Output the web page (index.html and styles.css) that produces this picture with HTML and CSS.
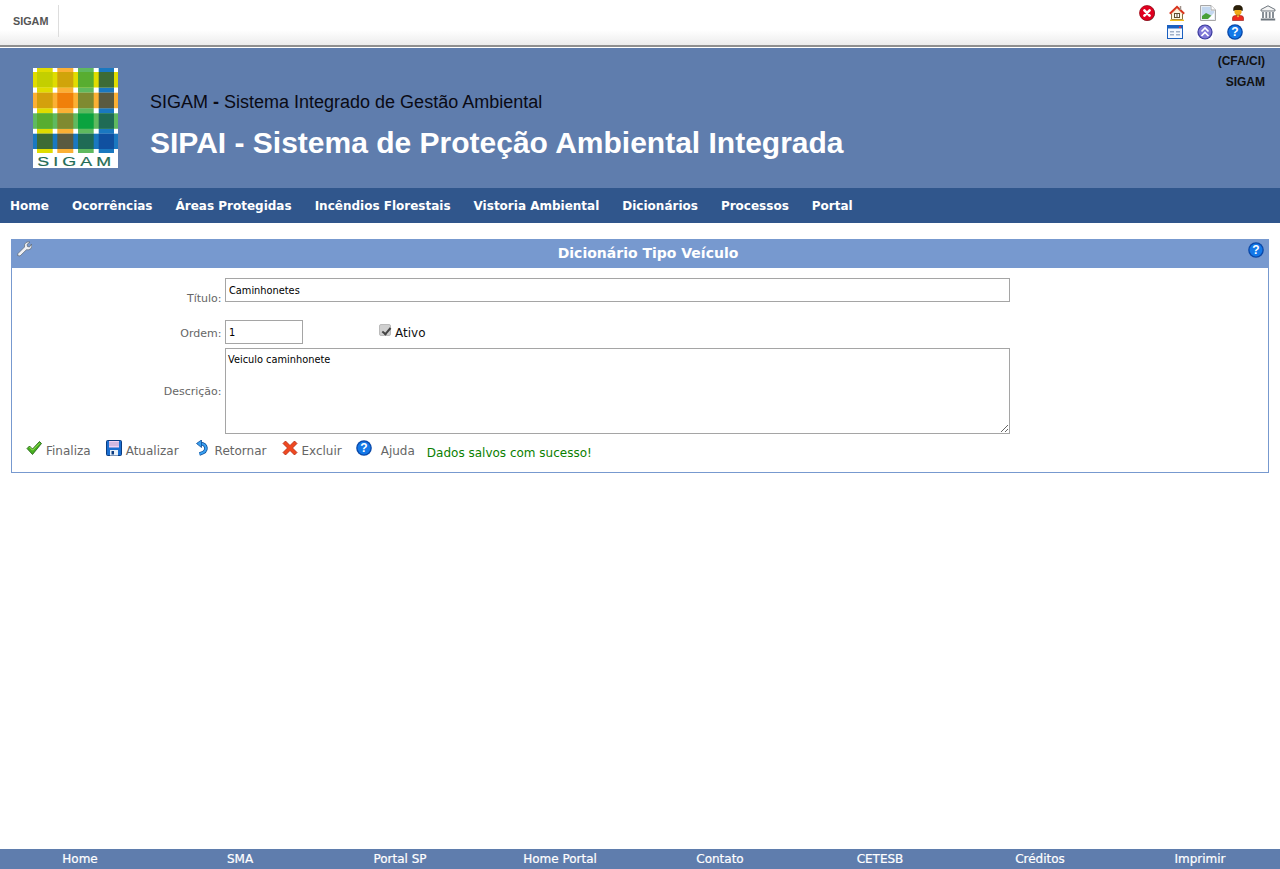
FILE: index.html
```html
<!DOCTYPE html>
<html lang="pt-BR">
<head>
<meta charset="utf-8">
<title>SIPAI - Dicionário Tipo Veículo</title>
<link rel="stylesheet" href="styles.css">
</head>
<body>
<div class="page">
  <div class="topbar">
    <div class="brand">SIGAM</div>
    <div class="tools">
      <div class="tool-row">
        <svg class="ico" viewBox="0 0 16 16"><circle cx="8.500" cy="8.500" r="7.500" fill="#777"/><circle cx="8" cy="8" r="7.500" fill="#e00020" stroke="#980010" stroke-width=".7"/><path d="M5.400 5.400l5.200 5.200M10.600 5.400l-5.200 5.200" stroke="#fff" stroke-width="2.600" stroke-linecap="round"/></svg>
        <svg class="ico" viewBox="0 0 16 16"><path d="M2.500 8v6.500h11V8" fill="#fff8e0" stroke="#8a7040"/><path d="M.8 8.800L8 1.800l7.200 7" fill="#f8e8d0" stroke="#d8341c" stroke-width="2"/><path d="M11.500 1v4" stroke="#a09088" stroke-width="1.500"/><path d="M3.500 9.500L8 5l4.500 4.500V14h-9z" fill="#fff8e0"/><rect x="5.500" y="8.500" width="5" height="4" fill="#fff" stroke="#605030"/><path d="M8 8.500v4" stroke="#605030"/><path d="M1 15.300h14" stroke="#f0c020" stroke-width="1.400"/></svg>
        <svg class="ico" viewBox="0 0 16 16"><path d="M.5.500h10.500l4.500 4.500v10.500H.5z" fill="#e8eef4" stroke="#a8a8a8"/><path d="M11 .5v4.500h4.500" fill="#fff" stroke="#a8a8a8"/><path d="M2 2h8.500v4H14v8H2z" fill="#c4d8f0"/><path d="M2 14V11l4-3 4 2 2 1-3 3z" fill="#48a038"/><path d="M8 14l6-6v6z" fill="#fff"/></svg>
        <svg class="ico" viewBox="0 0 16 16"><path d="M3.500 4.500Q3.500 .3 8 .3t4.500 4.200v1h-9z" fill="#2c2008" stroke="#181004" stroke-width=".5"/><path d="M4.500 5h7v3L10 10H6L4.500 8z" fill="#f0a818"/><path d="M6 9.500h4v2H6z" fill="#c88810"/><path d="M2.500 15.500V13q0-2.500 3-2.500h5q3 0 3 2.500v2.500z" fill="#ee2a20" stroke="#901810" stroke-width=".6"/><path d="M6.500 10.500h3l-1.500 2z" fill="#f8d040"/></svg>
        <svg class="ico" viewBox="0 0 16 16"><path d="M8 .8L1 4.500v1.500h14V4.500z" fill="#f4f4f4" stroke="#6c747c"/><path d="M3 7v6M6.300 7v6M9.700 7v6M13 7v6" stroke="#7c848c" stroke-width="1.800"/><path d="M.8 14.500h14.400" stroke="#6c747c" stroke-width="2"/></svg>
      </div>
      <div class="tool-row tool-row-low">
        <svg class="ico" viewBox="0 0 16 16"><rect x=".5" y="1.500" width="15" height="13" fill="#f4f8ff" stroke="#1a60c0"/><rect x="1" y="2" width="14" height="2.500" fill="#1a60c0"/><rect x="12" y="2.500" width="2" height="1.500" fill="#e83030"/><path d="M3 7h4v1.500H3zM9 7h4v1.500H9zM3 10h4v1.500H3zM9 10h4v1.500H9z" fill="#a0b0c8"/></svg>
        <svg class="ico" viewBox="0 0 16 16"><rect width="16" height="16" fill="#fff"/><circle cx="8" cy="8" r="7.600" fill="#3c3c9c"/><circle cx="8" cy="8" r="6.400" fill="#8078d8"/><path d="M4.500 7.500L8 4l3.500 3.500M4.500 12L8 8.500l3.500 3.500" fill="none" stroke="#fff" stroke-width="1.700"/></svg>
        <svg class="ico" viewBox="0 0 16 16"><circle cx="8" cy="8" r="7.800" fill="#0a48a8"/><circle cx="8" cy="8" r="6.500" fill="#1478e8"/><text class="q" x="8" y="12.400">?</text></svg>
      </div>
    </div>
  </div>

  <header class="banner">
    <svg class="logo" viewBox="0 0 85 100" role="img" aria-label="SIGAM">
      <rect width="85" height="100" fill="#fff"/>
      <rect x="0" y="4" width="85" height="15.500" fill="#e0dc00"/>
      <rect x="0" y="24.700" width="85" height="15.500" fill="#fbb034"/>
      <rect x="0" y="45.300" width="85" height="15.500" fill="#5fb95f"/>
      <rect x="0" y="65.700" width="85" height="15.300" fill="#1a78c0"/>
      <rect x="4" y="4" width="15.700" height="15.500" fill="#c3cf00"/>
      <rect x="4" y="0" width="15.700" height="4" fill="#e0dc00"/><rect x="4" y="19.500" width="15.700" height="5.200" fill="#e0dc00"/><rect x="4" y="40.200" width="15.700" height="5.100" fill="#e0dc00"/><rect x="4" y="60.800" width="15.700" height="4.900" fill="#e0dc00"/><rect x="4" y="81" width="15.700" height="4" fill="#e0dc00"/>
      <rect x="24.300" y="0" width="16" height="4" fill="#fbb034"/><rect x="24.300" y="19.500" width="16" height="5.200" fill="#fbb034"/><rect x="24.300" y="40.200" width="16" height="5.100" fill="#fbb034"/><rect x="24.300" y="60.800" width="16" height="4.900" fill="#fbb034"/><rect x="24.300" y="81" width="16" height="4" fill="#fbb034"/>
      <rect x="45" y="0" width="15.700" height="4" fill="#5fb95f"/><rect x="45" y="19.500" width="15.700" height="5.200" fill="#5fb95f"/><rect x="45" y="40.200" width="15.700" height="5.100" fill="#5fb95f"/><rect x="45" y="60.800" width="15.700" height="4.900" fill="#5fb95f"/><rect x="45" y="81" width="15.700" height="4" fill="#5fb95f"/>
      <rect x="65.700" y="0" width="15.300" height="4" fill="#1a78c0"/><rect x="65.700" y="19.500" width="15.300" height="5.200" fill="#1a78c0"/><rect x="65.700" y="40.200" width="15.300" height="5.100" fill="#1a78c0"/><rect x="65.700" y="60.800" width="15.300" height="4.900" fill="#1a78c0"/><rect x="65.700" y="81" width="15.300" height="4" fill="#1a78c0"/>
      <rect x="24.300" y="4" width="16" height="15.500" fill="#d0a40a"/><rect x="45" y="4" width="15.700" height="15.500" fill="#58ad30"/><rect x="65.700" y="4" width="15.300" height="15.500" fill="#3d6b35"/>
      <rect x="4" y="24.700" width="15.700" height="15.500" fill="#d4a00c"/><rect x="24.300" y="24.700" width="16" height="15.500" fill="#f0800a"/><rect x="45" y="24.700" width="15.700" height="15.500" fill="#7f8a30"/><rect x="65.700" y="24.700" width="15.300" height="15.500" fill="#5a5a40"/>
      <rect x="4" y="45.300" width="15.700" height="15.500" fill="#58ad30"/><rect x="24.300" y="45.300" width="16" height="15.500" fill="#7f8a30"/><rect x="45" y="45.300" width="15.700" height="15.500" fill="#0aa33f"/><rect x="65.700" y="45.300" width="15.300" height="15.500" fill="#1f6b55"/>
      <rect x="4" y="65.700" width="15.700" height="15.300" fill="#3d6b35"/><rect x="24.300" y="65.700" width="16" height="15.300" fill="#5a5a40"/><rect x="45" y="65.700" width="15.700" height="15.300" fill="#1f6b55"/><rect x="65.700" y="65.700" width="15.300" height="15.300" fill="#1050a0"/>
      <text class="logo-text" x="4.300" y="97.600" textLength="78" lengthAdjust="spacingAndGlyphs">SIGAM</text>
    </svg>
    <div class="titles">
      <div class="subtitle">SIGAM <b>-</b> Sistema Integrado de Gestão Ambiental</div>
      <div class="title">SIPAI - Sistema de Proteção Ambiental Integrada</div>
    </div>
    <div class="userinfo">
      <div>(CFA/CI)</div>
      <div>SIGAM</div>
    </div>
  </header>

  <nav class="menu">
    <a>Home</a><a>Ocorrências</a><a>Áreas Protegidas</a><a>Incêndios Florestais</a><a>Vistoria Ambiental</a><a>Dicionários</a><a>Processos</a><a>Portal</a>
  </nav>

  <main class="content">
    <section class="panel">
      <div class="panel-head">
        <svg class="wrench" viewBox="0 0 16 16"><path d="M1.500 14.500L2 12.500l6.500-6.500Q8 3 10 1.500q2-1 4-.5l-3 2.500.5 2L13.500 6 15.500 3q.8 2.500-.5 4.500-2 2-4.500 1.200L4 15z" fill="#eef0f4" stroke="#5a6470" stroke-width=".7"/></svg>
        <h1>Dicionário Tipo Veículo</h1>
        <svg class="ico help-head" viewBox="0 0 16 16"><circle cx="8" cy="8" r="7.800" fill="#0a48a8"/><circle cx="8" cy="8" r="6.500" fill="#1478e8"/><text class="q" x="8" y="12.400">?</text></svg>
      </div>
      <form class="form">
        <div class="row row-title">
          <label class="lbl lbl-low">Título:</label>
          <input class="field field-wide" type="text" value="Caminhonetes">
        </div>
        <div class="row row-order">
          <label class="lbl">Ordem:</label>
          <input class="field field-short" type="text" value="1">
          <label class="active"><input class="check" type="checkbox" checked disabled>Ativo</label>
        </div>
        <div class="row row-desc">
          <label class="lbl">Descrição:</label>
          <textarea class="field field-area">Veiculo caminhonete</textarea>
        </div>
        <div class="actions">
          <a class="act act-fin"><svg class="ico" viewBox="0 0 16 16"><path d="M1 8.500l2.500-2.500 3 3L13.500 1.500 15.500 3.500 6.500 14.500z" fill="#48b020" stroke="#1c5c10" stroke-width=".8"/><path d="M3.500 7l3 3.200 7-7" fill="none" stroke="#a8e860" stroke-width=".9"/></svg>Finaliza</a>
          <a class="act act-upd"><svg class="ico" viewBox="0 0 16 16"><rect x=".5" y=".5" width="15" height="15" rx="1" fill="#1a6ed0" stroke="#0c3c80"/><rect x="3" y="1" width="10" height="6.500" fill="#f0d0f0"/><path d="M3 3h10M3 5h10" stroke="#b0a0d0"/><rect x="4" y="10" width="8" height="5.500" fill="#e8f0f8"/><rect x="5.500" y="11" width="2.500" height="3.500" fill="#0c3c80"/></svg>Atualizar</a>
          <a class="act act-ret"><svg class="ico" viewBox="0 0 16 16"><path d="M5 3.500C12 4 14 11.500 4.500 14" fill="none" stroke="#0c4c98" stroke-width="3.600"/><path d="M5 3.500C12 4 14 11.500 4.500 14" fill="none" stroke="#3aa0f0" stroke-width="2"/><path d="M6.500 0v7.500L1.500 3.500z" fill="#3aa0f0" stroke="#0c4c98" stroke-width=".8"/></svg>Retornar</a>
          <a class="act act-del"><svg class="ico" viewBox="0 0 16 16"><path d="M3.500 1L8 5.500 12.500 1 15 3.500 10.500 8l4.500 4.500-2.500 2.500L8 10.500 3.500 15 1 12.500 5.500 8 1 3.500z" fill="#f04820" stroke="#b02810" stroke-width=".8"/></svg>Excluir</a>
          <a class="act act-help"><svg class="ico" viewBox="0 0 16 16"><circle cx="8" cy="8" r="7.800" fill="#0a48a8"/><circle cx="8" cy="8" r="6.500" fill="#1478e8"/><text class="q" x="8" y="12.400">?</text></svg>Ajuda</a>
          <span class="msg">Dados salvos com sucesso!</span>
        </div>
      </form>
    </section>
  </main>

  <footer class="foot">
    <a>Home</a><a>SMA</a><a>Portal SP</a><a>Home Portal</a><a>Contato</a><a>CETESB</a><a>Créditos</a><a>Imprimir</a>
  </footer>
</div>
</body>
</html>
```

FILE: styles.css
```css
* { box-sizing: border-box; }
html, body { margin: 0; padding: 0; }
body { background: #fff; font-family: "DejaVu Sans", Verdana, sans-serif; color: #000; }
.page { height: 869px; display: flex; flex-direction: column; overflow: hidden; }

.topbar {
  height: 48px; flex: none; display: flex; justify-content: space-between;
  background: linear-gradient(#fff 0, #fff 30px, #ececec 45px);
  border-bottom: 1px solid #fff;
  box-shadow: inset 0 -2px 0 #8f8f8f;
}
.brand {
  font: bold 10.800px "Liberation Sans", Arial, sans-serif; color: #555;
  margin: 5px 0 0 0; width: 59px; height: 32px; padding: 10px 0 0 13px;
  border-right: 1px solid #ddd;
}
.tools { padding: 5px 4px 0 0; display: flex; flex-direction: column; gap: 3px; align-items: flex-end; }
.tool-row { display: flex; gap: 14.250px; height: 16px; }
.tool-row-low { margin-right: 33px; }
.ico { width: 16px; height: 16px; display: block; flex: none; }
.q { font: bold 12px "Liberation Sans", Arial, sans-serif; fill: #fff; text-anchor: middle; }

.banner { height: 140px; flex: none; background: #5f7dad; display: flex; position: relative; }
.logo { width: 85px; height: 100px; margin: 20px 0 0 33px; flex: none; }
.logo-text { font: 13px "Liberation Sans", Arial, sans-serif; letter-spacing: 3px; fill: #1f6b55; stroke: #1f6b55; stroke-width: .2px; }
.titles { margin-left: 32px; padding-top: 43px; font-family: "Liberation Sans", Arial, sans-serif; }
.subtitle { font-size: 18px; line-height: 22px; color: #0a0a14; }
.title { font-size: 30px; line-height: 36px; font-weight: bold; color: #fff; margin-top: 12px; }
.userinfo {
  position: absolute; right: 15px; top: 3px; text-align: right;
  font: bold 12px/21px "Liberation Sans", Arial, sans-serif; color: #111;
}

.menu { height: 35px; flex: none; background: #30568c; display: flex; gap: 23px; padding: 0 10px; align-items: center; }
.menu a { font-size: 12px; font-weight: bold; color: #fff; }

.content { flex: 1; padding: 16px 11px 0; }
.panel { border: 1px solid #7799cf; height: 234px; }
.panel-head {
  height: 29px; background: #7799cf; position: relative; display: flex; justify-content: center; align-items: center;
  margin: -1px -1px 0; padding: 0 0 2px 16px;
}
.panel-head h1 { margin: 0; font-size: 14px; font-weight: bold; color: #fff; }
.wrench { position: absolute; left: 5px; top: 2px; width: 16px; height: 16px; }
.help-head { position: absolute; right: 5px; top: 3px; }

.form { padding: 10px 0 0; }
.row { display: flex; align-items: flex-start; }
.lbl { width: 209.500px; flex: none; text-align: right; font-size: 11px; color: #666; margin-right: 3.500px; }
.lbl-low { padding-top: 14px; }
.field {
  border: 1px solid #a5a5a5; margin: 0; padding: 0 3px; background: #fff; color: #000;
  font: 9.800px "DejaVu Sans", Verdana, sans-serif; display: block; outline: none;
}
.field-wide { width: 785px; height: 24px; }
.field-short { width: 78px; height: 24px; }
.field-area { width: 785px; height: 86px; padding: 5px 2px; }
.row-title { height: 42px; }
.row-order { height: 28px; }
.row-order .lbl { padding-top: 7px; }
.row-desc { height: 86px; align-items: center; }
.active { display: flex; align-items: flex-start; margin-left: 76px; padding-top: 5px; font-size: 12px; line-height: 16px; color: #111; }
.check {
  appearance: none; -webkit-appearance: none; margin: -1px 4px 0 0; width: 12px; height: 12px;
  border: 1px solid #bbb; border-radius: 2px; background: #cfcfcf; position: relative;
}
.check::after {
  content: ""; position: absolute; left: 3.500px; top: .5px; width: 3px; height: 7px;
  border: solid #444; border-width: 0 2px 2px 0; transform: rotate(40deg);
}

.actions { display: flex; align-items: flex-start; margin-top: 6px; padding-left: 14px; font-size: 12px; color: #666; }
.act { display: flex; color: #666; line-height: 16px; padding-top: 3px; }
.act .ico { margin-top: -3px; margin-right: 4px; }
.act-upd { margin-left: 15px; }
.act-ret { margin-left: 16px; }
.act-del { margin-left: 16px; }
.act-del .ico { margin-right: 3px; }
.act-help { margin-left: 14px; }
.act-help .ico { margin-right: 9px; }
.msg { color: #0a8000; margin-left: 12px; line-height: 16px; padding-top: 5px; }

.foot { height: 20px; flex: none; background: #5f7dad; display: grid; grid-template-columns: repeat(8, 1fr); align-items: center; }
.foot a { text-align: center; font-size: 12px; color: #fff; -webkit-text-stroke: .2px #fff; }
```
